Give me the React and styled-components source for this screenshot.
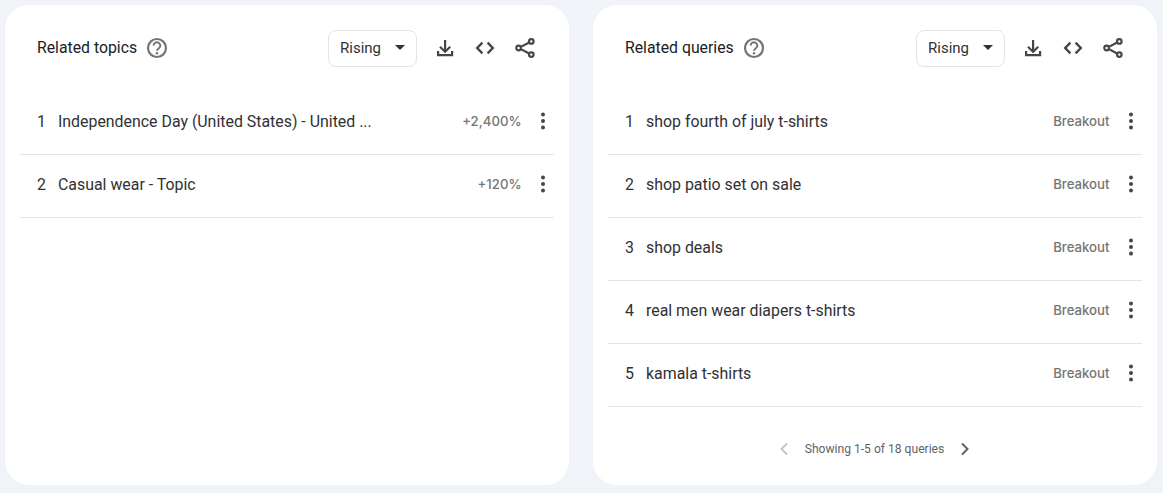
import React from "react";
import styled, { createGlobalStyle } from "styled-components";

const topics = [
  { label: "Independence Day (United States) - United ...", value: "+2,400%" },
  { label: "Casual wear - Topic", value: "+120%" },
];

const queries = [
  { label: "shop fourth of july t-shirts", value: "Breakout" },
  { label: "shop patio set on sale", value: "Breakout" },
  { label: "shop deals", value: "Breakout" },
  { label: "real men wear diapers t-shirts", value: "Breakout" },
  { label: "kamala t-shirts", value: "Breakout" },
];

const HelpIcon = () => (
  <svg width="22" height="22" viewBox="0 0 22 22" fill="none">
    <circle cx="11" cy="11" r="9" stroke="#70757a" strokeWidth="2.2" />
    <path d="M7.7 8.6a3.3 3.3 0 1 1 5.2 2.6c-1.3.9-1.9 1.4-1.9 2.6" stroke="#70757a" strokeWidth="2" />
    <circle cx="11" cy="16.3" r="1.2" fill="#70757a" />
  </svg>
);

const DownloadIcon = () => (
  <svg width="24" height="24" viewBox="0 0 24 24" fill="#444746">
    <path d="M11 4h2.2v9.2l3.3-3.3 1.5 1.5-5.9 5.9-5.9-5.9 1.5-1.5 3.3 3.3z" />
    <path d="M4 15h2.2v3h11.8v-3h2.2v5.2H4z" />
  </svg>
);

const EmbedIcon = () => (
  <svg width="24" height="24" viewBox="0 0 24 24" fill="none" stroke="#444746" strokeWidth="2.4">
    <path d="M9.4 6.6 4.2 12l5.2 5.4" />
    <path d="M14.6 6.6l5.2 5.4-5.2 5.4" />
  </svg>
);

const ShareIcon = () => (
  <svg width="24" height="24" viewBox="0 0 24 24" fill="none" stroke="#444746" strokeWidth="2.2">
    <circle cx="18.3" cy="5.4" r="2.3" />
    <circle cx="5.6" cy="12" r="2.3" />
    <circle cx="18.3" cy="18.6" r="2.3" />
    <path d="M7.8 10.9l8.4-4.4M7.8 13.1l8.4 4.4" />
  </svg>
);

const MoreIcon = () => (
  <svg width="6" height="18" viewBox="0 0 6 18" fill="#444746">
    <circle cx="3" cy="2.5" r="2" />
    <circle cx="3" cy="9" r="2" />
    <circle cx="3" cy="15.5" r="2" />
  </svg>
);

const Chevron = ({ left, color }) => (
  <svg width="12" height="14" viewBox="0 0 12 14" fill="none" stroke={color} strokeWidth="2">
    <path d={left ? "M9 1.5 3.5 7 9 12.5" : "M3 1.5 8.5 7 3 12.5"} />
  </svg>
);

const Panel = ({ title, items, footer }) => (
  <Card>
    <Header>
      <Title>{title}</Title>
      <HelpSlot>
        <HelpIcon />
      </HelpSlot>
      <Picker>
        <PickerText>Rising</PickerText>
        <Caret />
      </Picker>
      <Actions>
        <DownloadIcon />
        <EmbedIcon />
        <ShareIcon />
      </Actions>
    </Header>
    <List>
      {items.map((item, i) => (
        <Row key={item.label}>
          <Rank>{i + 1}</Rank>
          <Label>{item.label}</Label>
          <Value>{item.value}</Value>
          <MoreSlot>
            <MoreIcon />
          </MoreSlot>
        </Row>
      ))}
    </List>
    {footer && (
      <Pager>
        <Chevron left color="#c4c7c5" />
        <PagerText>{footer}</PagerText>
        <Chevron color="#5f6368" />
      </Pager>
    )}
  </Card>
);

const App = () => (
  <Page>
    <GlobalStyle />
    <Panel title="Related topics" items={topics} />
    <Panel title="Related queries" items={queries} footer="Showing 1-5 of 18 queries" />
  </Page>
);

export default App;

const GlobalStyle = createGlobalStyle`
  html, body {
    margin: 0;
    background: #f0f4f9;
  }
  body {
    font-family: Roboto, "Liberation Sans", sans-serif;
    color: #202124;
  }
`;

const Page = styled.div`
  display: grid;
  grid-template-columns: 564px 564px;
  column-gap: 24px;
  padding: 5px 6px 8px 5px;
  height: 493px;
  box-sizing: border-box;
`;

const Card = styled.section`
  background: #fff;
  border-radius: 24px;
  padding: 0 15px;
  display: flex;
  flex-direction: column;
`;

const Header = styled.header`
  display: flex;
  align-items: center;
  height: 87px;
  padding: 0 17px;
`;

const Title = styled.h2`
  margin: 0 0 2px;
  font-size: 15.8px;
  font-weight: 400;
  color: #202124;
`;

const HelpSlot = styled.span`
  display: flex;
  margin: 0 0 2px 9px;
`;

const Picker = styled.div`
  margin-left: auto;
  width: 89px;
  height: 37px;
  box-sizing: border-box;
  border: 1px solid #e3e3e3;
  border-radius: 8px;
  padding: 0 11px;
  display: flex;
  align-items: center;
  justify-content: space-between;
`;

const PickerText = styled.span`
  font-size: 15px;
  color: #303134;
  margin-bottom: 2px;
`;

const Caret = styled.span`
  width: 0;
  height: 0;
  margin-bottom: 2px;
  border-left: 5px solid transparent;
  border-right: 5px solid transparent;
  border-top: 5px solid #303134;
`;

const Actions = styled.div`
  display: flex;
  align-items: center;
  gap: 16px;
  margin: 0 0 2px 16px;
`;

const List = styled.div`
  display: flex;
  flex-direction: column;
`;

const Row = styled.div`
  display: flex;
  align-items: center;
  height: 63px;
  box-sizing: border-box;
  padding: 0 8.5px 4px 17px;
  border-bottom: 1px solid #e3e3e3;
`;

const Rank = styled.span`
  width: 21px;
  font-size: 15.9px;
  color: #303134;
`;

const Label = styled.span`
  font-size: 15.9px;
  color: #303134;
  white-space: nowrap;
`;

const Value = styled.span`
  margin-left: auto;
  font-family: Inter, Roboto, sans-serif;
  font-size: 13.2px;
  font-weight: 500;
  color: #757575;
`;

const MoreSlot = styled.span`
  display: flex;
  margin-left: 18px;
`;

const Pager = styled.nav`
  display: flex;
  align-items: center;
  justify-content: center;
  gap: 15px;
  margin-top: 35px;
  padding-right: 1px;
`;

const PagerText = styled.span`
  font-size: 12.1px;
  color: #5f6368;
`;
